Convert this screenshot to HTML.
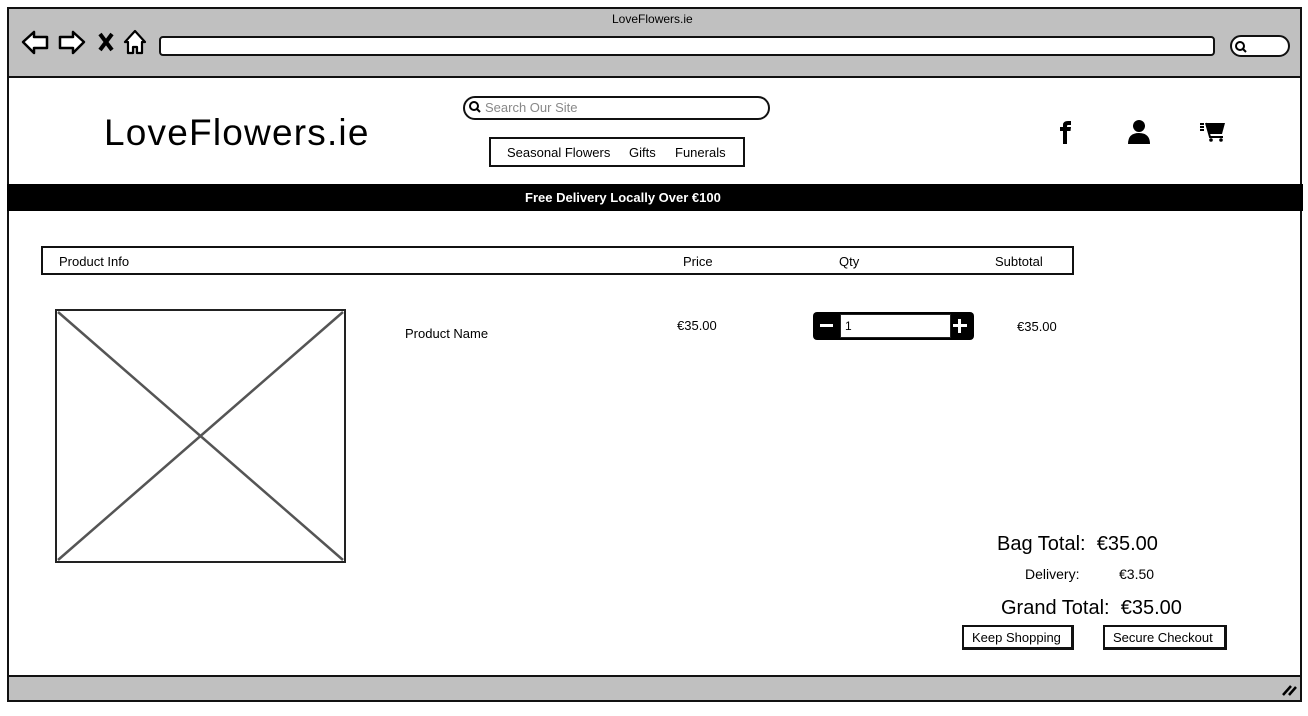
<!DOCTYPE html>
<html><head><meta charset="utf-8"><style>
*{margin:0;padding:0;box-sizing:border-box}
body{width:1308px;height:716px;background:#fff;position:relative;overflow:hidden;font-family:"Liberation Sans",sans-serif;color:#000}
.a{position:absolute}
.t{position:absolute;white-space:nowrap;font-size:13px}
</style></head><body>
<div class="a" style="left:7px;top:7px;width:1295px;height:695px;border:2px solid #111;background:#fff"></div>
<div class="a" style="left:9px;top:9px;width:1291px;height:69px;background:#c0c0c0;border-bottom:2px solid #111"></div>
<div class="t" style="left:612px;top:12px;font-size:12px">LoveFlowers.ie</div>
<svg class="a" style="left:20px;top:28px" width="130" height="30" viewBox="0 0 130 30">
<path d="M3 14 L14 4 L14 9 L27 9 L27 20 L14 20 L14 25 Z" fill="#fff" stroke="#000" stroke-width="2.5" stroke-linejoin="round"/>
<path d="M64 14 L53 4 L53 9 L40 9 L40 20 L53 20 L53 25 Z" fill="#fff" stroke="#000" stroke-width="2.5" stroke-linejoin="round"/>
<path d="M80 6 L92 22 M92 6 L80 22" stroke="#000" stroke-width="4"/>
<path d="M115 3 L105 14 L108 14 L108 25 L113 25 L113 19 L117 19 L117 25 L122 25 L122 14 L125 14 Z" fill="#fff" stroke="#000" stroke-width="2.2" stroke-linejoin="round"/>
</svg>
<div class="a" style="left:159px;top:36px;width:1056px;height:20px;background:#fff;border:2.5px solid #111;border-radius:4px"></div>
<div class="a" style="left:1230px;top:35px;width:60px;height:22px;background:#fff;border:2.5px solid #111;border-radius:12px"></div>
<svg class="a" style="left:1234px;top:40px" width="14" height="14"><circle cx="6" cy="6" r="4" fill="none" stroke="#000" stroke-width="2"/><path d="M9 9 L12 12" stroke="#000" stroke-width="2"/></svg>
<div class="t" style="left:104px;top:112px;font-size:37px;letter-spacing:1.2px">LoveFlowers.ie</div>
<div class="a" style="left:463px;top:96px;width:307px;height:24px;border:2px solid #111;border-radius:12px"></div>
<svg class="a" style="left:468px;top:100px" width="14" height="14"><circle cx="6" cy="6" r="4" fill="none" stroke="#000" stroke-width="2"/><path d="M9 9 L12 12" stroke="#000" stroke-width="2"/></svg>
<div class="t" style="left:485px;top:100px;color:#888">Search Our Site</div>
<div class="a" style="left:489px;top:137px;width:256px;height:30px;border:2px solid #111"></div>
<div class="t" style="left:507px;top:145px">Seasonal Flowers</div>
<div class="t" style="left:629px;top:145px">Gifts</div>
<div class="t" style="left:675px;top:145px">Funerals</div>
<svg class="a" style="left:1058px;top:120px" width="16" height="25"><path d="M5 24 L5 11 L2 11 L2 7 L5 7 L5 5 Q5 1 10 1 L13 1 L13 5 L10 5 Q9 5 9 6 L9 7 L13 7 L12.5 11 L9 11 L9 24 Z"/></svg>
<svg class="a" style="left:1127px;top:119px" width="24" height="26"><circle cx="12" cy="7" r="6"/><path d="M1 25 Q1 14 12 14 Q23 14 23 25 Z"/></svg>
<svg class="a" style="left:1199px;top:120px" width="28" height="22"><path d="M7 3 L26 3 L23 14 L10 14 Z"/><path d="M1 4h4M1 7h4M1 10h4M7 3 L11 17 L24 17" stroke="#000" stroke-width="2" fill="none"/><circle cx="12" cy="20" r="1.8"/><circle cx="22" cy="20" r="1.8"/></svg>
<div class="a" style="left:7px;top:184px;width:1296px;height:27px;background:#000"></div>
<div class="t" style="left:525px;top:190px;color:#fff;font-weight:bold">Free Delivery Locally Over €100</div>
<div class="a" style="left:41px;top:246px;width:1033px;height:29px;border:2px solid #111"></div>
<div class="t" style="left:59px;top:254px">Product Info</div>
<div class="t" style="left:683px;top:254px">Price</div>
<div class="t" style="left:839px;top:254px">Qty</div>
<div class="t" style="left:995px;top:254px">Subtotal</div>
<svg class="a" style="left:55px;top:309px" width="291" height="254"><rect x="1" y="1" width="289" height="252" fill="none" stroke="#222" stroke-width="2"/><path d="M3 3 L288 251 M288 3 L3 251" stroke="#555" stroke-width="2.5"/></svg>
<div class="t" style="left:405px;top:326px">Product Name</div>
<div class="t" style="left:677px;top:318px">€35.00</div>
<div class="a" style="left:813px;top:312px;width:161px;height:28px;background:#000;border-radius:4px"></div>
<div class="a" style="left:840px;top:314px;width:111px;height:24px;background:#fff;border:1px solid #222"></div>
<div class="t" style="left:845px;top:319px;font-size:12px">1</div>
<div class="a" style="left:820px;top:324px;width:13px;height:3px;background:#fff"></div>
<div class="a" style="left:953px;top:324px;width:14px;height:3px;background:#fff"></div>
<div class="a" style="left:958px;top:319px;width:3px;height:14px;background:#fff"></div>
<div class="t" style="left:1017px;top:319px">€35.00</div>
<div class="t" style="left:997px;top:533px;font-size:20px">Bag Total:&nbsp; €35.00</div>
<div class="t" style="left:1025px;top:566px;font-size:14px">Delivery:</div>
<div class="t" style="left:1119px;top:566px;font-size:14px">€3.50</div>
<div class="t" style="left:1001px;top:597px;font-size:20px">Grand Total:&nbsp; €35.00</div>
<div class="a" style="left:962px;top:625px;width:112px;height:25px;border:2px solid #111;border-right-width:3px;border-bottom-width:3px"></div>
<div class="t" style="left:972px;top:630px">Keep Shopping</div>
<div class="a" style="left:1103px;top:625px;width:124px;height:25px;border:2px solid #111;border-right-width:3px;border-bottom-width:3px"></div>
<div class="t" style="left:1113px;top:630px">Secure Checkout</div>
<div class="a" style="left:9px;top:675px;width:1291px;height:25px;background:#c0c0c0;border-top:2px solid #111"></div>
<svg class="a" style="left:1281px;top:683px" width="16" height="14"><path d="M2 12 L10 3 M8 12 L15 4" stroke="#000" stroke-width="2.5"/></svg>
</body></html>
